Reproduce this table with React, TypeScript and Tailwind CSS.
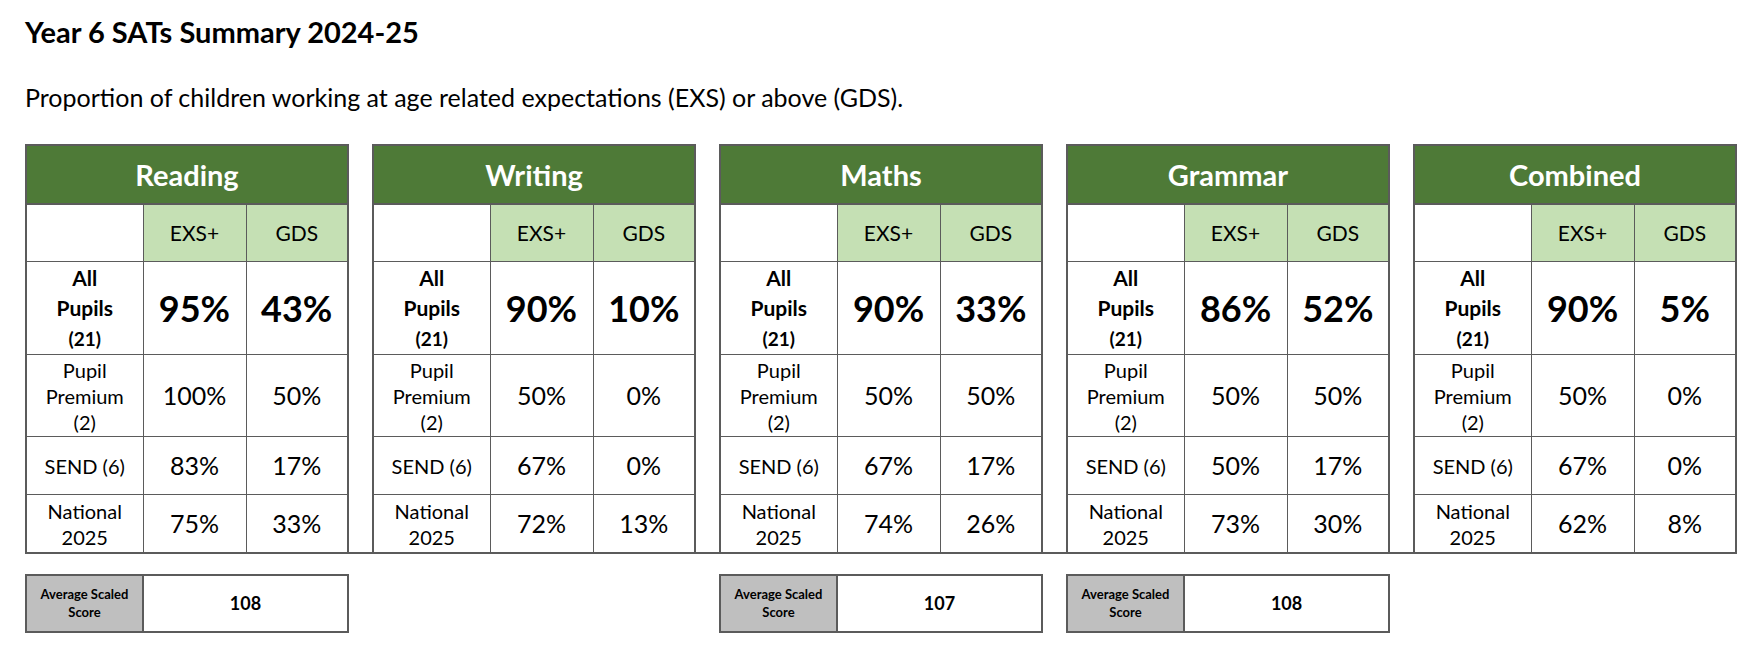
const subjects = [
  { name: "Reading", rows: [["95%", "43%"], ["100%", "50%"], ["83%", "17%"], ["75%", "33%"]], avg: "108" },
  { name: "Writing", rows: [["90%", "10%"], ["50%", "0%"], ["67%", "0%"], ["72%", "13%"]] },
  { name: "Maths", rows: [["90%", "33%"], ["50%", "50%"], ["67%", "17%"], ["74%", "26%"]], avg: "107" },
  { name: "Grammar", rows: [["86%", "52%"], ["50%", "50%"], ["50%", "17%"], ["73%", "30%"]], avg: "108" },
  { name: "Combined", rows: [["90%", "5%"], ["50%", "0%"], ["67%", "0%"], ["62%", "8%"]] },
];

const rowLabels = [
  <>All<br />Pupils<br /><span className="text-[19px]">(21)</span></>,
  <>Pupil<br />Premium<br />(2)</>,
  <>SEND (6)</>,
  <>National<br />2025</>,
];

const rowHeights = ["h-[93px]", "h-[82px]", "h-[58px]", "h-[58px]"];

function Cols() {
  return (
    <colgroup>
      {subjects.map((s, i) => (
        <Group key={s.name} last={i === subjects.length - 1} />
      ))}
    </colgroup>
  );
}

function Group({ last }: { last: boolean }) {
  return (
    <>
      <col className="w-[117px]" />
      <col className="w-[103px]" />
      <col className="w-[102px]" />
      {!last && <col className="w-[25px]" />}
    </>
  );
}

const line = "border border-[#5b5b5b]";

export default function App() {
  return (
    <div className="min-h-screen bg-white pl-[25px] pt-[15px] text-black font-['Lato','Liberation_Sans',sans-serif]">
      <h1 className="text-[29px] font-bold leading-[1.2]">Year 6 SATs Summary 2024-25</h1>
      <p className="mt-[32px] text-[25px] leading-[1.2]">
        Proportion of children working at age related expectations (EXS) or above (GDS).
      </p>

      <table className="mt-[32px] w-[1710px] table-fixed border-collapse text-center">
        <Cols />
        <tbody>
          <tr className="h-[59px]">
            {subjects.map((s, i) => (
              <>
                <th
                  key={s.name}
                  colSpan={3}
                  className={`${line} border-2 bg-[#4e7a37] text-[29px] font-bold text-white`}
                >
                  {s.name}
                </th>
                {i < subjects.length - 1 && <td key={s.name + "-gap"} />}
              </>
            ))}
          </tr>
          <tr className="h-[58px]">
            {subjects.map((s, i) => (
              <>
                <td key={s.name + "-l"} className={`${line} border-l-2`} />
                <td key={s.name + "-e"} className={`${line} bg-[#c5e0b4] text-[21px]`}>EXS+</td>
                <td key={s.name + "-g"} className={`${line} border-r-2 bg-[#c5e0b4] text-[21px]`}>GDS</td>
                {i < subjects.length - 1 && <td key={s.name + "-gap"} />}
              </>
            ))}
          </tr>
          {rowLabels.map((label, r) => {
            const first = r === 0;
            const lastRow = r === rowLabels.length - 1;
            const bottom = lastRow ? "border-b-2" : "";
            return (
              <tr key={r} className={rowHeights[r]}>
                {subjects.map((s, i) => (
                  <>
                    <td
                      key={s.name + "-l"}
                      className={`${line} border-l-2 ${bottom} ${
                        first ? "text-[21px] font-bold leading-[30px]" : "text-[20px] leading-[26px]"
                      }`}
                    >
                      {label}
                    </td>
                    <td
                      key={s.name + "-e"}
                      className={`${line} ${bottom} ${first ? "text-[36px] font-bold" : "text-[25px]"}`}
                    >
                      {s.rows[r][0]}
                    </td>
                    <td
                      key={s.name + "-g"}
                      className={`${line} border-r-2 ${bottom} ${first ? "text-[36px] font-bold" : "text-[25px]"}`}
                    >
                      {s.rows[r][1]}
                    </td>
                    {i < subjects.length - 1 && (
                      <td key={s.name + "-gap"} className={lastRow ? "border-b-2 border-[#5b5b5b]" : ""} />
                    )}
                  </>
                ))}
              </tr>
            );
          })}
        </tbody>
      </table>

      <table className="mt-[20px] w-[1710px] table-fixed border-collapse text-center">
        <Cols />
        <tbody>
          <tr className="h-[57px]">
            {subjects.map((s, i) => (
              <>
                {s.avg ? (
                  <>
                    <td key={s.name + "-a"} className={`${line} border-2 bg-[#bfbfbf] text-[13px] font-bold leading-[18px]`}>
                      Average Scaled<br />Score
                    </td>
                    <td key={s.name + "-v"} colSpan={2} className={`${line} border-2 text-[18px] font-bold`}>
                      {s.avg}
                    </td>
                  </>
                ) : (
                  <td key={s.name + "-a"} colSpan={3} />
                )}
                {i < subjects.length - 1 && <td key={s.name + "-gap"} />}
              </>
            ))}
          </tr>
        </tbody>
      </table>
    </div>
  );
}
